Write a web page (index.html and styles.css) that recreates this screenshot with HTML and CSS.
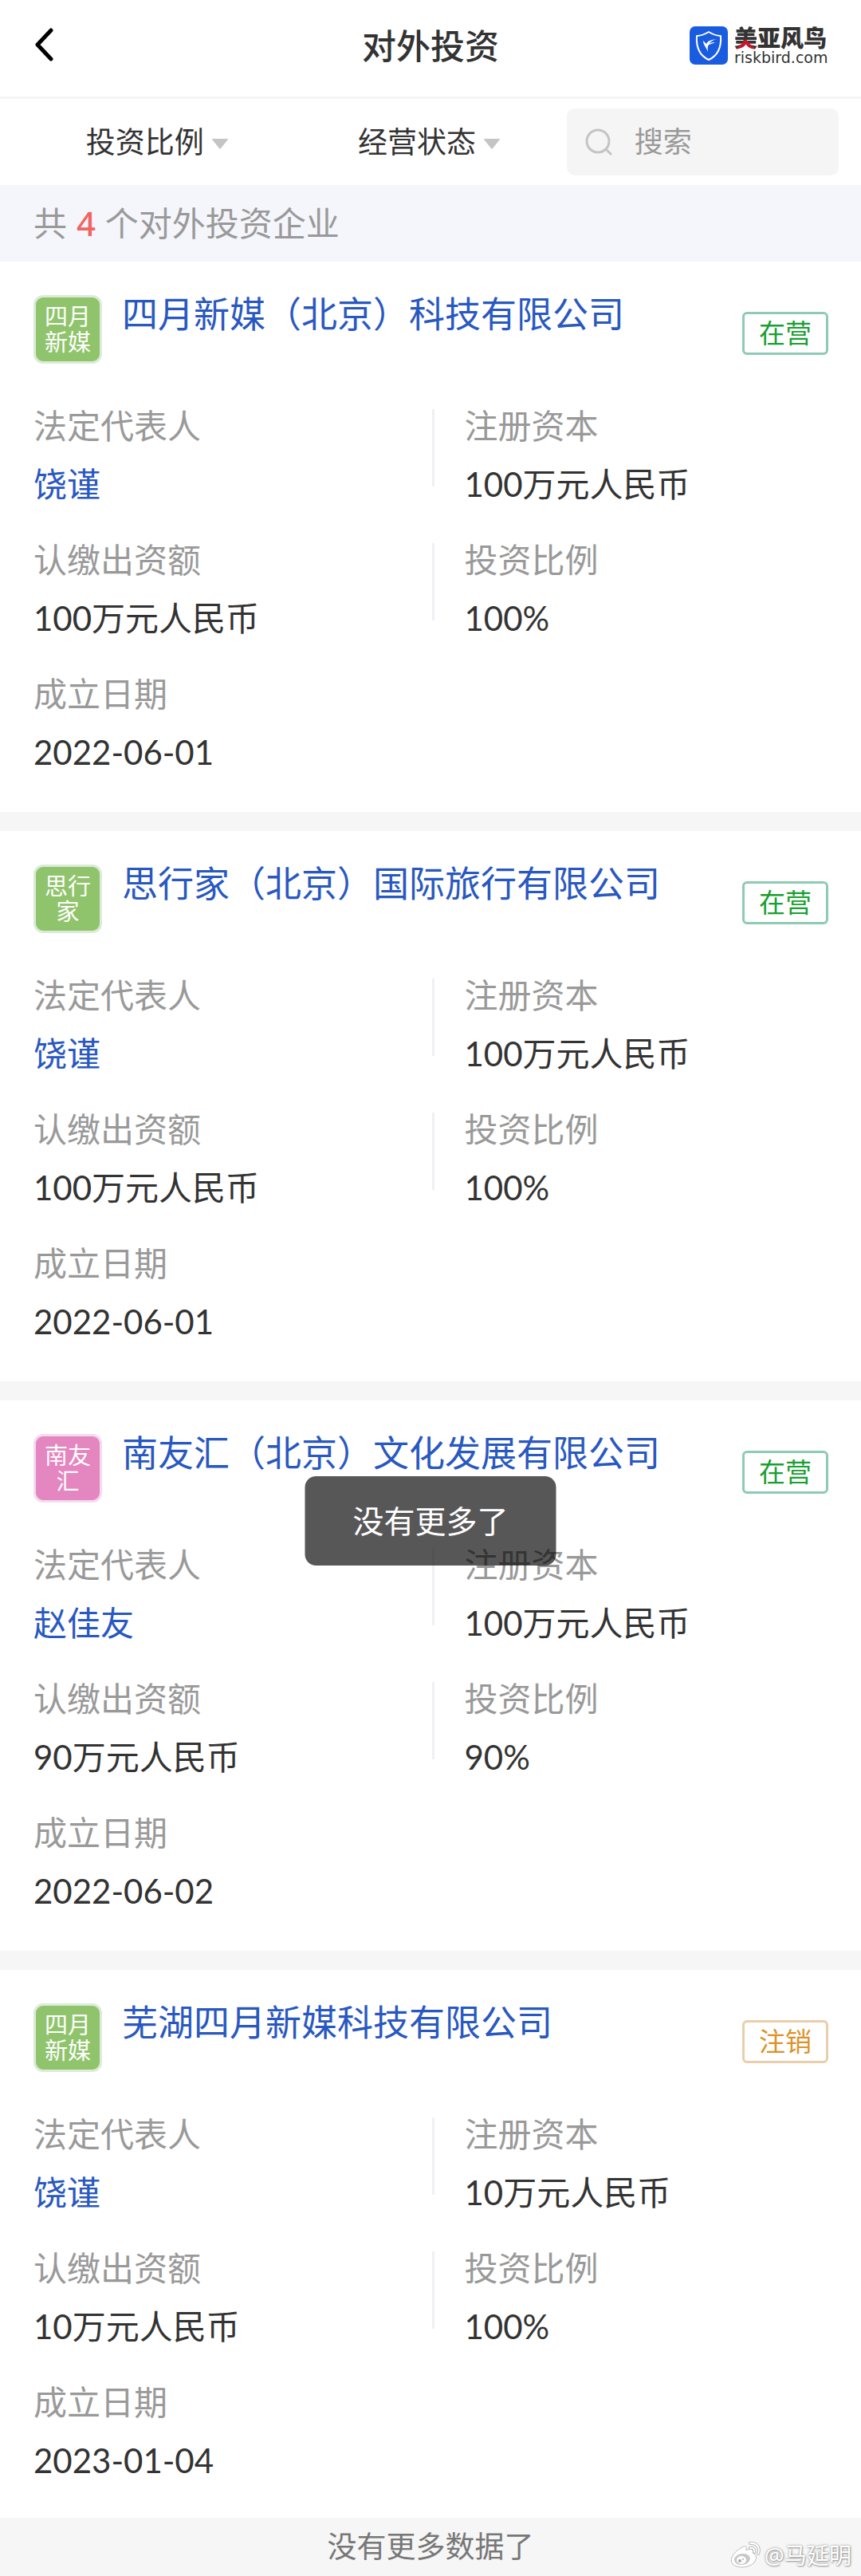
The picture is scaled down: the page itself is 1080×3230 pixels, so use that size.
FILE: index.html
```html
<!DOCTYPE html>
<html lang="zh-CN">
<head>
<meta charset="utf-8">
<meta name="viewport" content="width=device-width, initial-scale=1.0">
<title>对外投资</title>
<link rel="stylesheet" href="styles.css">
</head>
<body>
<header class="header">
  <button class="back" type="button" aria-label="返回">
    <svg width="24" height="42" viewBox="0 0 24 42"><path d="M21 3 4 21 21 39" fill="none" stroke="#000" stroke-width="5" stroke-linecap="round" stroke-linejoin="round"/></svg>
  </button>
  <h1 class="header-title">对外投资</h1>
  <a class="logo" href="#">
    <svg width="48" height="48" viewBox="0 0 48 48">
      <rect width="48" height="48" rx="7" fill="#1a5ce0"/>
      <path d="M24 7C19 10 14 12 9 12C8 26 13 37 24 42C35 37 40 26 39 12C34 12 29 10 24 7Z" fill="none" stroke="#fff" stroke-width="2" stroke-linejoin="round"/>
      <path d="M34 16C27 17 23 18 21 22L17 18C17 23 20 25 23 32C22 25 23 19 34 16ZM32 20C27 20 24 21 23 24C26 22 28 22 32 20Z" fill="#fff"/>
    </svg>
    <span class="logo-text">
      <span class="logo-cn"><span class="logo-mei">美</span>亚风鸟</span>
      <span class="logo-en">riskbird.com</span>
    </span>
  </a>
</header>

<form class="filters">
  <label class="filter">
    <select aria-label="投资比例"><option>投资比例</option></select>
    <svg class="caret" width="20" height="13" viewBox="0 0 20 13"><path d="M1 0H19Q21 0 19 2L11 12Q10 13 9 12L1 2Q-1 0 1 0Z" fill="#c4c4c4"/></svg>
  </label>
  <label class="filter">
    <select aria-label="经营状态"><option>经营状态</option></select>
    <svg class="caret" width="20" height="13" viewBox="0 0 20 13"><path d="M1 0H19Q21 0 19 2L11 12Q10 13 9 12L1 2Q-1 0 1 0Z" fill="#c4c4c4"/></svg>
  </label>
  <label class="search">
    <svg width="34" height="34" viewBox="0 0 34 34" fill="none" stroke="#c4c4c4" stroke-width="3" stroke-linecap="round"><circle cx="16" cy="16" r="14"/><path d="M27 27 32 32"/></svg>
    <input type="search" placeholder="搜索" aria-label="搜索">
  </label>
</form>

<p class="summary">共 <em>4</em> 个对外投资企业</p>

<main class="list">
  <article class="card">
    <div class="card-head">
      <div class="avatar">四月新媒</div>
      <h2><a href="#">四月新媒（北京）科技有限公司</a></h2>
      <span class="status">在营</span>
    </div>
    <dl class="fields">
      <div class="field"><dt>法定代表人</dt><dd><a href="#">饶谨</a></dd></div>
      <div class="field"><dt>注册资本</dt><dd>100万元人民币</dd></div>
      <div class="field"><dt>认缴出资额</dt><dd>100万元人民币</dd></div>
      <div class="field"><dt>投资比例</dt><dd>100%</dd></div>
      <div class="field"><dt>成立日期</dt><dd>2022-06-01</dd></div>
    </dl>
  </article>

  <article class="card">
    <div class="card-head">
      <div class="avatar">思行家</div>
      <h2><a href="#">思行家（北京）国际旅行有限公司</a></h2>
      <span class="status">在营</span>
    </div>
    <dl class="fields">
      <div class="field"><dt>法定代表人</dt><dd><a href="#">饶谨</a></dd></div>
      <div class="field"><dt>注册资本</dt><dd>100万元人民币</dd></div>
      <div class="field"><dt>认缴出资额</dt><dd>100万元人民币</dd></div>
      <div class="field"><dt>投资比例</dt><dd>100%</dd></div>
      <div class="field"><dt>成立日期</dt><dd>2022-06-01</dd></div>
    </dl>
  </article>

  <article class="card">
    <div class="card-head">
      <div class="avatar avatar-pink">南友汇</div>
      <h2><a href="#">南友汇（北京）文化发展有限公司</a></h2>
      <span class="status">在营</span>
    </div>
    <dl class="fields">
      <div class="field"><dt>法定代表人</dt><dd><a href="#">赵佳友</a></dd></div>
      <div class="field"><dt>注册资本</dt><dd>100万元人民币</dd></div>
      <div class="field"><dt>认缴出资额</dt><dd>90万元人民币</dd></div>
      <div class="field"><dt>投资比例</dt><dd>90%</dd></div>
      <div class="field"><dt>成立日期</dt><dd>2022-06-02</dd></div>
    </dl>
    <div class="toast" role="status">没有更多了</div>
  </article>

  <article class="card">
    <div class="card-head">
      <div class="avatar">四月新媒</div>
      <h2><a href="#">芜湖四月新媒科技有限公司</a></h2>
      <span class="status status-closed">注销</span>
    </div>
    <dl class="fields">
      <div class="field"><dt>法定代表人</dt><dd><a href="#">饶谨</a></dd></div>
      <div class="field"><dt>注册资本</dt><dd>10万元人民币</dd></div>
      <div class="field"><dt>认缴出资额</dt><dd>10万元人民币</dd></div>
      <div class="field"><dt>投资比例</dt><dd>100%</dd></div>
      <div class="field"><dt>成立日期</dt><dd>2023-01-04</dd></div>
    </dl>
  </article>
</main>

<footer class="footer">
  没有更多数据了
  <div class="watermark">
    <svg width="38" height="34" viewBox="0 0 38 34">
      <path d="M15 7C19 4 21 6 20 11C25 8 30 9 28 14C33 16 34 21 30 26C24 33 9 34 3 28C-2 22 5 12 15 7Z" fill="#fff" stroke="#bbb"/>
      <ellipse cx="15" cy="22" rx="10" ry="7" transform="rotate(-8 15 22)" fill="#c8c8c8"/>
      <ellipse cx="14" cy="23" rx="6" ry="5" fill="#fff"/>
      <circle cx="12" cy="24" r="2" fill="#aaa"/><circle cx="16" cy="22" r="1" fill="#aaa"/>
      <g fill="none" stroke-linecap="round"><path d="M25 2C33 1 38 7 35 15M25 8C29 7 31 10 30 13" stroke="#bbb" stroke-width="4"/><path d="M25 2C33 1 38 7 35 15M25 8C29 7 31 10 30 13" stroke="#fff" stroke-width="2"/></g>
    </svg>
    <span>@马延明</span>
  </div>
</footer>
</body>
</html>
```
FILE: styles.css
```css
* { box-sizing: border-box; }
body {
  margin: 0;
  background: #fff;
  color: #333;
  font-family: "Noto Sans", "Noto Sans CJK SC", sans-serif;
  font-size: 42px;
  line-height: 48px;
}
h1, h2, p, dl, dd { margin: 0; font-weight: 400; }
a { color: #2858c0; text-decoration: none; }
svg { display: block; flex: none; }
button, select, input {
  margin: 0;
  padding: 0;
  border: 0;
  background: none;
  color: inherit;
  font: inherit;
}

.header {
  display: grid;
  grid-template-columns: 1fr auto 1fr;
  align-items: start;
  padding: 33px 41px 37px;
  border-bottom: 3px solid #f5f5f5;
}
.back { justify-self: start; padding: 2px 0 0 2px; }
.header-title {
  font-family: "Noto Sans CJK SC", sans-serif;
  font-size: 43px;
  font-weight: 500;
  line-height: 44px;
}
.logo {
  display: flex;
  gap: 8px;
  justify-self: end;
  color: #333;
}
.logo-text { display: flex; flex-direction: column; width: 118px; }
.logo-cn {
  font: 900 29px/27px "Noto Sans CJK SC", sans-serif;
  white-space: nowrap;
}
.logo-mei {
  background: conic-gradient(from 135deg at 50% 56%, #c0182a 90deg, #333 0);
  -webkit-background-clip: text;
  background-clip: text;
  color: transparent;
}
.logo-en { font: 19px/24px "DejaVu Sans", sans-serif; }

.filters {
  display: grid;
  grid-template-columns: repeat(3, 1fr);
  padding: 12px 28px;
  font-size: 37px;
}
.filter {
  display: flex;
  align-items: center;
  justify-content: center;
  gap: 10px;
  padding-right: 4px;
}
.filter select { appearance: none; height: 48px; }
.caret { margin-top: 4px; }
.search {
  display: flex;
  align-items: center;
  gap: 28px;
  height: 84px;
  padding: 0 23px;
  border-radius: 10px;
  background: #f5f5f5;
}
.search input { width: 100%; min-width: 0; outline: 0; font-size: 36px; }
.search input::placeholder { color: #999; opacity: 1; }

.summary {
  padding: 24px 42px;
  background: #f5f6fb;
  color: #999;
}
.summary em {
  margin: 0 1px;
  color: #f06464;
  font-style: normal;
  font-weight: 500;
}

.list {
  display: flex;
  flex-direction: column;
  gap: 24px;
  background: #f6f6f6;
}
.card {
  position: relative;
  padding: 42px 41px 51px 42px;
  background: #fff;
}
.card:last-child { padding-bottom: 48px; }
.card-head { display: flex; align-items: flex-start; }
.card-head h2 { flex: 1; margin-left: 25px; font-size: 45px; }
.avatar {
  display: flex;
  align-items: center;
  width: 86px;
  height: 86px;
  padding: 0 10px;
  border: 3px solid #dcebd8;
  border-radius: 12px;
  background: #90c46c;
  color: #fff;
  font-size: 29px;
  line-height: 32px;
  text-align: center;
}
.avatar-pink { border-color: #f3dcee; background: #e486c0; }
.status {
  margin-top: 21px;
  padding: 0 18px;
  border: 3px solid #8ecab4;
  border-radius: 6px;
  color: #18a030;
  font-size: 33px;
}
.status-closed { border-color: #e8cfac; color: #dc9228; }

.fields {
  display: grid;
  grid-template-columns: 1fr 1fr;
  row-gap: 47px;
  margin-top: 54px;
}
.field { display: flex; flex-direction: column; gap: 25px; }
.field dt { color: #999; }
.field dd { font-family: Lato, "Noto Sans CJK SC", sans-serif; }
.field:nth-child(even) {
  padding-left: 42px;
  background: linear-gradient(#eef0f3, #eef0f3) 1px 3px / 3px 97px no-repeat;
}

.toast {
  position: absolute;
  top: 95px;
  left: 50%;
  padding: 32px 60px;
  border-radius: 14px;
  background: rgba(0, 0, 0, .66);
  color: #fff;
  font-size: 39px;
  white-space: nowrap;
  transform: translateX(-50%);
}

.footer {
  position: relative;
  padding: 12px 0 14px;
  background: #f6f6f6;
  color: #777;
  font-size: 37px;
  text-align: center;
}
.watermark {
  position: absolute;
  right: 12px;
  bottom: 10px;
  display: flex;
  align-items: center;
  gap: 5px;
  color: #fff;
  font-size: 28px;
  line-height: 34px;
  text-shadow: 0 0 3px #888, 1px 1px 2px #aaa;
}
```
